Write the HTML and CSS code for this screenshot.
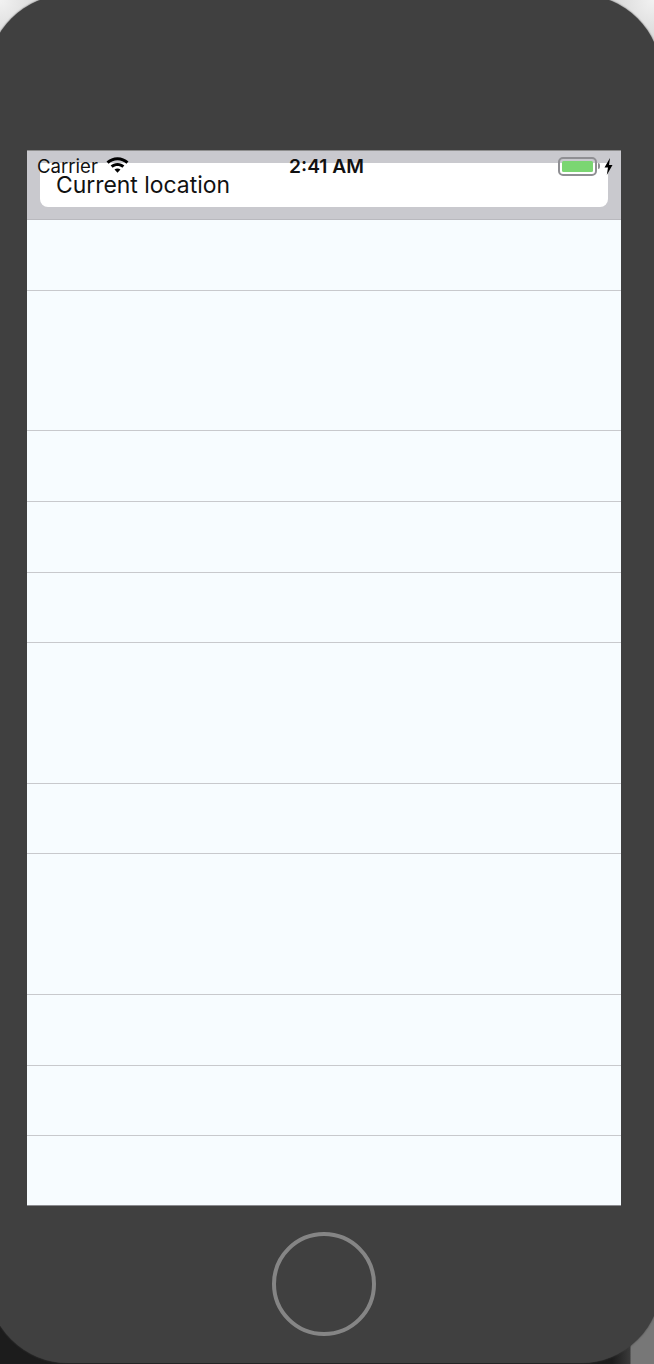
FILE: index.html
```html
<!DOCTYPE html>
<html lang="en">
<head>
  <meta charset="UTF-8">
  <meta name="viewport" content="width=device-width, initial-scale=1.0">
  <title>Current location</title>
  <link rel="stylesheet" href="styles.css">
</head>
<body>
  <div class="phone">
    <div class="screen">
      <div class="status-bar">
        <div class="status-left">
          <span class="carrier">Carrier</span>
          <svg class="wifi" width="23" height="16" viewBox="1 2 20 14">
            <path d="M11 2.2c-3.700 0-7 1.400-9.600 3.700l1.800 2c2.100-1.900 4.800-3 7.800-3s5.700 1.100 7.800 3l1.800-2C18 3.600 14.700 2.200 11 2.200z"/>
            <path d="M11 7.200c-2.300 0-4.400.9-6 2.300l1.800 2c1.100-1 2.600-1.600 4.200-1.600s3.100.6 4.200 1.600l1.800-2c-1.600-1.400-3.700-2.300-6-2.300z"/>
            <path d="M11 12c-1 0-1.900.4-2.600 1L11 15.800 13.600 13c-.7-.6-1.600-1-2.600-1z"/>
          </svg>
        </div>
        <span class="clock">2:41 AM</span>
        <div class="status-right">
          <div class="battery"><div class="battery-level"></div></div>
          <div class="battery-cap"></div>
          <svg class="bolt" width="9" height="17" viewBox="0 0 9 16" preserveAspectRatio="none">
            <path d="M6 0 0.500 9H4L2.800 16 8.500 6.500H5z"/>
          </svg>
        </div>
      </div>
      <div class="search-bar">
        <div class="search-field">Current location</div>
      </div>
      <div class="list">
        <div class="row"></div>
        <div class="row row-tall"></div>
        <div class="row"></div>
        <div class="row"></div>
        <div class="row"></div>
        <div class="row row-tall"></div>
        <div class="row"></div>
        <div class="row row-tall"></div>
        <div class="row"></div>
        <div class="row"></div>
        <div class="row"></div>
      </div>
    </div>
    <div class="home-button"></div>
  </div>
</body>
</html>
```

FILE: styles.css
```css
html, body {
  height: 100%;
}

body {
  margin: 0;
  overflow: hidden;
  font-family: 'Inter', 'Liberation Sans', sans-serif;
  color: #111111;
  background:
    linear-gradient(to right, #1c1c1c 612px, #3a3a3a 630px, #777777 631px) bottom / 100% 70px no-repeat,
    radial-gradient(circle at 0 0, #f2f2f2 0, #d6d6d6 45px) top left / 50% 60px no-repeat,
    radial-gradient(circle at 100% 0, #f2f2f2 0, #d6d6d6 45px) top right / 50% 60px no-repeat;
}

.phone {
  width: 673px;
  height: 1368px;
  margin: -5px 0 0 -12px;
  padding: 155px 0 0 39px;
  box-sizing: border-box;
  border-radius: 80px;
  background-color: #404040;
  box-shadow: 0 0 2px #404040;
}

.screen {
  position: relative;
  width: 594px;
  height: 1055px;
  display: flex;
  flex-direction: column;
  border-top: 1px solid #8e8e8e;
  background-color: #f7fcff;
}

.status-bar {
  position: absolute;
  top: 0;
  left: 0;
  right: 0;
  height: 30px;
  display: flex;
  align-items: center;
  justify-content: space-between;
  padding: 0 8px 0 10px;
}

.status-left {
  display: flex;
  align-items: center;
  gap: 8px;
  width: 203px;
}

.carrier {
  font-size: 18.600px;
  line-height: 32px;
}

.wifi {
  margin-top: -2px;
}

.clock {
  font-size: 19.200px;
  font-weight: 600;
  line-height: 30px;
}

.status-right {
  display: flex;
  align-items: center;
  justify-content: flex-end;
  width: 200px;
}

.battery {
  width: 39px;
  height: 19px;
  padding: 2px;
  box-sizing: border-box;
  border: 2px solid #8f8f93;
  border-radius: 5px;
}

.battery-level {
  height: 100%;
  border-radius: 1.500px;
  background-color: #7bd672;
}

.battery-cap {
  width: 2px;
  height: 6px;
  margin-left: 1px;
  border-radius: 0 2px 2px 0;
  background-color: #8f8f93;
}

.bolt {
  margin-left: 4px;
}

.search-bar {
  height: 69px;
  padding: 12px 13px;
  box-sizing: border-box;
  border-bottom: 1px solid #b9b9be;
  background-color: #c9c9ce;
}

.search-field {
  height: 44px;
  padding-left: 16px;
  border-radius: 0 0 8px 8px;
  background-color: #ffffff;
  font-size: 22.900px;
  line-height: 44px;
}

.list {
  flex: 1;
  display: flex;
  flex-direction: column;
  box-shadow: inset 0 -1px 0 #8a8a8e;
}

.row {
  flex: 1;
  border-bottom: 1px solid #c8c9cd;
}

.row:last-child {
  border-bottom: none;
}

.row-tall {
  flex: 2;
}

.home-button {
  width: 104px;
  height: 104px;
  margin: 26px 0 0 245px;
  box-sizing: border-box;
  border: 4px solid #858585;
  border-radius: 50%;
}
```
